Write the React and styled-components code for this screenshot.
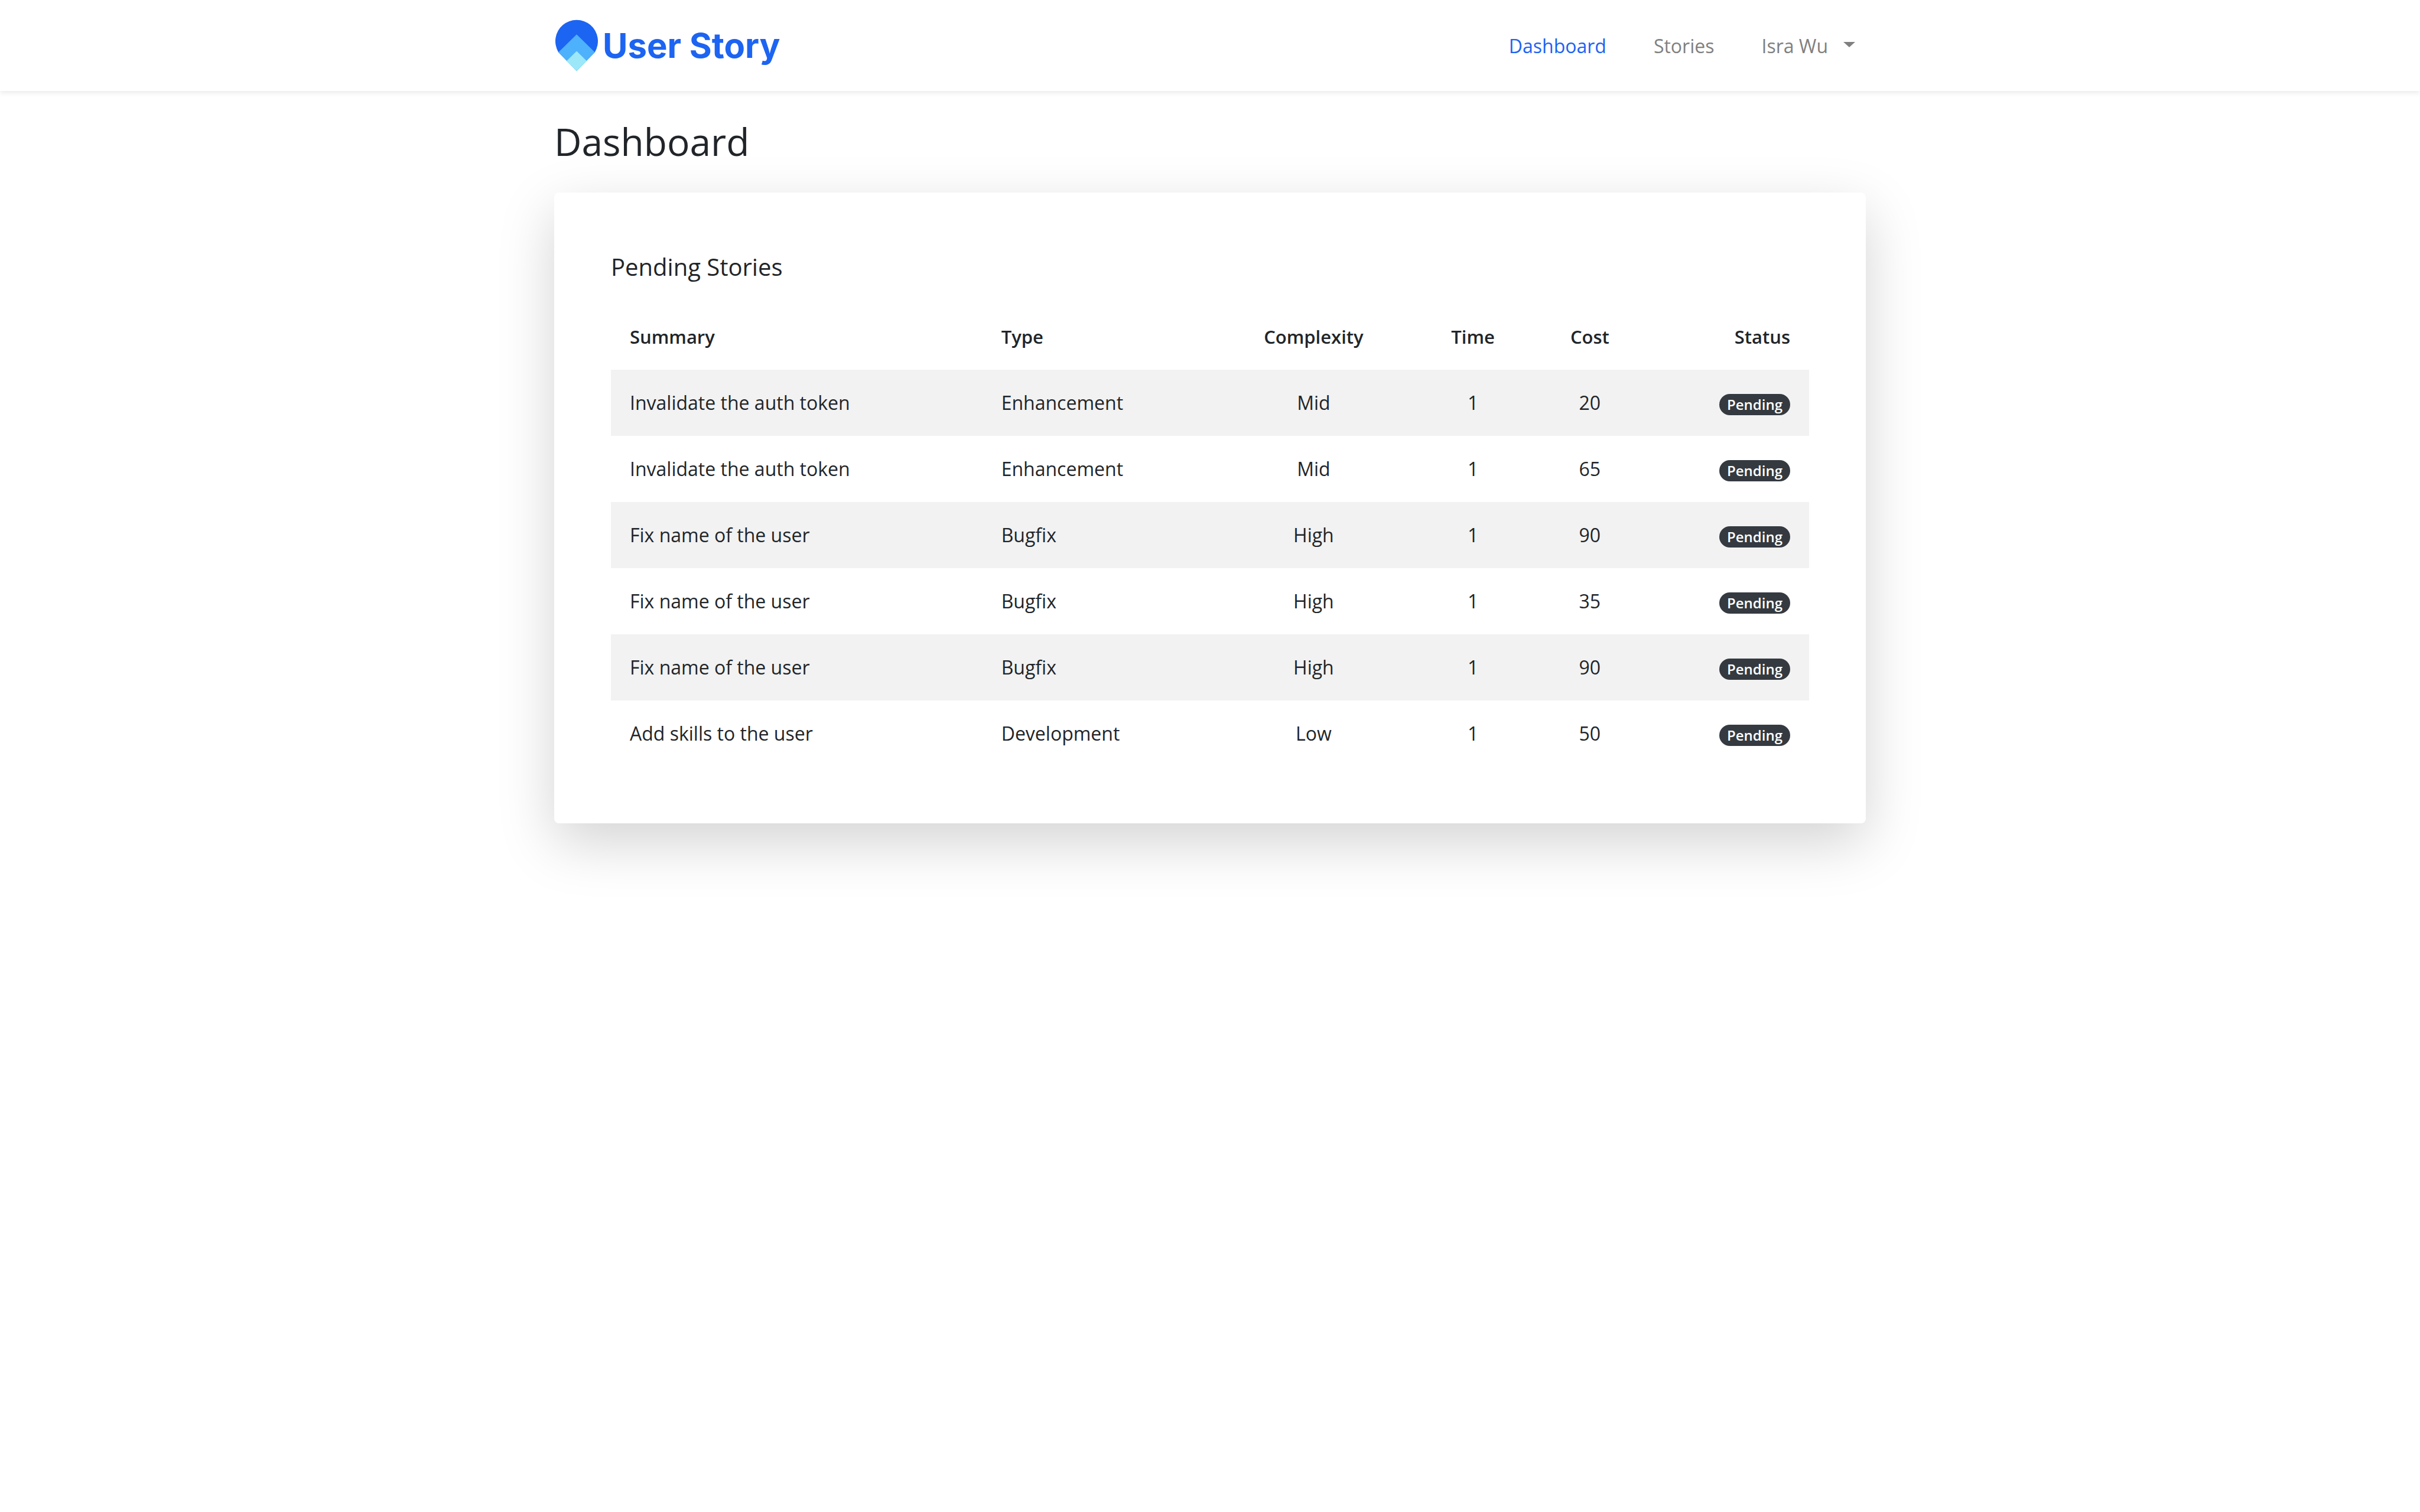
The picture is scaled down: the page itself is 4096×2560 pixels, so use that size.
import React from 'react';
import styled, { createGlobalStyle } from 'styled-components';

const GlobalStyle = createGlobalStyle`
  *, *::before, *::after { box-sizing: border-box; }
  body {
    margin: 0;
    background: #fff;
    color: #212529;
    font-family: 'Open Sans', 'Noto Sans', sans-serif;
    font-size: 32px;
    line-height: 48px;
  }
`;

const Page = styled.div`
  min-height: 100vh;
`;

const Container = styled.div`
  width: 100%;
  max-width: 2280px;
  margin: 0 auto;
  padding: 0 30px;
`;

const Navbar = styled.header`
  background: #fff;
  box-shadow: 0 4px 8px rgba(0, 0, 0, 0.075);
`;

const NavbarInner = styled(Container)`
  display: flex;
  align-items: center;
  justify-content: space-between;
  min-height: 154px;
`;

const Brand = styled.a`
  display: flex;
  align-items: center;
  gap: 6px;
  color: #1c64f2;
  font-family: Inter, sans-serif;
  font-size: 58px;
  font-weight: 700;
  line-height: 70px;
  text-decoration: none;
`;

const Nav = styled.nav`
  display: flex;
  align-items: center;
  gap: 80px;
  padding: 2px 18px 0 0;
`;

const NavLink = styled.a`
  color: ${({ $active }) => ($active ? '#1c64f2' : '#808080')};
  text-decoration: none;
`;

const UserMenu = styled.button`
  display: flex;
  align-items: center;
  gap: 26px;
  padding: 0;
  border: 0;
  background: none;
  color: #808080;
  font: inherit;
  cursor: pointer;
`;

const Main = styled(Container).attrs({ as: 'main' })`
  padding-top: 48px;
  padding-bottom: 160px;
`;

const PageTitle = styled.h1`
  margin: 0 0 48px;
  font-size: 64px;
  font-weight: 400;
  line-height: 76px;
`;

const Card = styled.section`
  padding: 102px 96px 96px;
  border-radius: 8px;
  background: #fff;
  box-shadow: 0 32px 96px rgba(0, 0, 0, 0.175);
`;

const CardTitle = styled.h2`
  margin: 0 0 38px;
  font-size: 40px;
  font-weight: 400;
  line-height: 48px;
`;

const Table = styled.table`
  width: 100%;
  table-layout: fixed;
  border-collapse: collapse;
`;

const Column = styled.col`
  width: ${({ $width }) => $width};
`;

const HeadCell = styled.th`
  padding: 32px;
  font-size: 31px;
  font-weight: 600;
  text-align: ${({ $align }) => $align};
`;

const Row = styled.tr`
  &:nth-child(odd) { background: #f2f2f2; }
`;

const Cell = styled.td`
  padding: 32px;
  text-align: ${({ $align }) => $align};
`;

const Badge = styled.span`
  display: inline-block;
  padding: 6px 13px;
  border-radius: 18px;
  background: #343a40;
  color: #fff;
  font-size: 24px;
  font-weight: 600;
  line-height: 24px;
`;

const columns = [
  { key: 'summary', label: 'Summary', width: '31%', align: 'left' },
  { key: 'type', label: 'Type', width: '19.3%', align: 'left' },
  { key: 'complexity', label: 'Complexity', width: '16.7%', align: 'center' },
  { key: 'time', label: 'Time', width: '9.9%', align: 'center' },
  { key: 'cost', label: 'Cost', width: '9.6%', align: 'center' },
  { key: 'status', label: 'Status', width: '13.5%', align: 'right' },
];

const stories = [
  { summary: 'Invalidate the auth token', type: 'Enhancement', complexity: 'Mid', time: 1, cost: 20, status: 'Pending' },
  { summary: 'Invalidate the auth token', type: 'Enhancement', complexity: 'Mid', time: 1, cost: 65, status: 'Pending' },
  { summary: 'Fix name of the user', type: 'Bugfix', complexity: 'High', time: 1, cost: 90, status: 'Pending' },
  { summary: 'Fix name of the user', type: 'Bugfix', complexity: 'High', time: 1, cost: 35, status: 'Pending' },
  { summary: 'Fix name of the user', type: 'Bugfix', complexity: 'High', time: 1, cost: 90, status: 'Pending' },
  { summary: 'Add skills to the user', type: 'Development', complexity: 'Low', time: 1, cost: 50, status: 'Pending' },
];

function PinLogo() {
  return (
    <svg width="76" height="92" viewBox="0 0 76 92" aria-hidden="true">
      <path d="M7.2 57.4A36 36 0 1 1 68.8 57.4L38 89.3Z" fill="#1c64f2" />
      <path d="M38 27.3L68.8 57.6L38 89.3L7.2 57.6Z" fill="#4eb1fb" />
      <path d="M38 55.5L55 72.2L38 89.3L21 72.2Z" fill="#9ce8f9" />
    </svg>
  );
}

function Caret() {
  return (
    <svg width="20" height="14" viewBox="0 0 20 14" aria-hidden="true">
      <path d="M0 0H20L10 9Z" fill="currentColor" />
    </svg>
  );
}

export default function App() {
  return (
    <Page>
      <GlobalStyle />
      <Navbar>
        <NavbarInner>
          <Brand href="#home">
            <PinLogo />
            User Story
          </Brand>
          <Nav>
            <NavLink href="#dashboard" $active>Dashboard</NavLink>
            <NavLink href="#stories">Stories</NavLink>
            <UserMenu type="button">
              Isra Wu
              <Caret />
            </UserMenu>
          </Nav>
        </NavbarInner>
      </Navbar>
      <Main>
        <PageTitle>Dashboard</PageTitle>
        <Card>
          <CardTitle>Pending Stories</CardTitle>
          <Table>
            <colgroup>
              {columns.map((c) => <Column key={c.key} $width={c.width} />)}
            </colgroup>
            <thead>
              <tr>
                {columns.map((c) => (
                  <HeadCell key={c.key} scope="col" $align={c.align}>{c.label}</HeadCell>
                ))}
              </tr>
            </thead>
            <tbody>
              {stories.map((story, i) => (
                <Row key={i}>
                  {columns.map((c) => (
                    <Cell key={c.key} $align={c.align}>
                      {c.key === 'status' ? <Badge>{story.status}</Badge> : story[c.key]}
                    </Cell>
                  ))}
                </Row>
              ))}
            </tbody>
          </Table>
        </Card>
      </Main>
    </Page>
  );
}
